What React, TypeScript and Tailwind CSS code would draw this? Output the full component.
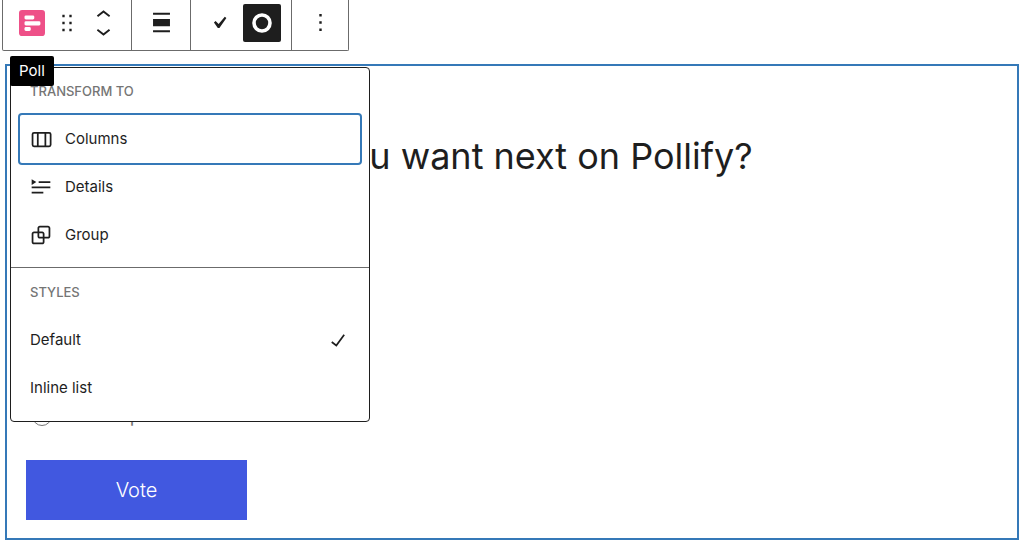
import React from "react";

type IconProps = {
  className?: string;
  children: React.ReactNode;
};

const Icon: React.FC<IconProps> = ({ className = "size-7", children }) => (
  <svg
    viewBox="0 0 24 24"
    fill="currentColor"
    aria-hidden="true"
    className={`shrink-0 ${className}`}
  >
    {children}
  </svg>
);

const transforms = [
  {
    name: "Columns",
    active: true,
    icon: (
      <path d="M15 7.5h-5v10h5v-10Zm1.5 0v10H19a.5.5 0 0 0 .5-.5V8a.5.5 0 0 0-.5-.5h-2.5ZM6 7.5h2.5v10H6a.5.5 0 0 1-.5-.5V8a.5.5 0 0 1 .5-.5ZM6 6h13a2 2 0 0 1 2 2v9a2 2 0 0 1-2 2H6a2 2 0 0 1-2-2V8a2 2 0 0 1 2-2Z" fillRule="evenodd" />
    ),
  },
  {
    name: "Details",
    active: false,
    icon: (
      <path d="M4 16h10v1.5H4V16Zm0-4.5h16V13H4v-1.5ZM10 7h10v1.5H10V7ZM4 5.25l4 2.5-4 2.5v-5Z" />
    ),
  },
  {
    name: "Group",
    active: false,
    icon: (
      <path d="M18 4h-7c-1.1 0-2 .9-2 2v3H6c-1.1 0-2 .9-2 2v7c0 1.1.9 2 2 2h7c1.1 0 2-.9 2-2v-3h3c1.1 0 2-.9 2-2V6c0-1.1-.9-2-2-2zm-4.5 14c0 .3-.2.5-.5.5H6c-.3 0-.5-.2-.5-.5v-7c0-.3.2-.5.5-.5h3V13c0 1.1.9 2 2 2h2.5v3zm0-4.5H11c-.3 0-.5-.2-.5-.5v-2.5H13c.3 0 .5.2.5.5v2.5zm5-.5c0 .3-.2.5-.5.5h-3V11c0-1.1-.9-2-2-2h-2.5V6c0-.3.2-.5.5-.5h7c.3 0 .5.2.5.5v7z" />
    ),
  },
];

const styles = [
  { name: "Default", selected: true },
  { name: "Inline list", selected: false },
];

const Toolbar: React.FC = () => (
  <div
    role="toolbar"
    aria-label="Block tools"
    className="ml-[2px] flex h-[51px] w-fit divide-x divide-[#6b6b6b] rounded-b-xs border border-t-0 border-[#6b6b6b]"
  >
    <div className="flex w-[129px] items-center gap-2 pb-[5px] pl-4">
      <button type="button" aria-label="Poll">
        <svg viewBox="0 0 25 25" className="size-[26px]" aria-hidden="true">
          <rect width="25" height="25" rx="3" fill="#ee5088" />
          <g fill="#fff">
            <rect x="5.3" y="5.3" width="9.4" height="3.8" rx="1.3" />
            <rect x="5.3" y="10.9" width="15.3" height="3.9" rx="1.3" />
            <rect x="5.3" y="16.4" width="6" height="3.7" rx="1.3" />
          </g>
        </svg>
      </button>
      <button type="button" aria-label="Drag">
        <Icon>
          <path d="M8 7h2V5H8v2zm0 6h2v-2H8v2zm0 6h2v-2H8v2zm6-14v2h2V5h-2zm0 8h2v-2h-2v2zm0 6h2v-2h-2v2z" />
        </Icon>
      </button>
      <div className="flex flex-col">
        <button type="button" aria-label="Move up" className="h-5 overflow-hidden">
          <Icon className="size-[29px]">
            <path d="M6.5 10.4L12 6l5.5 4.4-.9 1.2L12 8l-4.5 3.6-1-1.2z" />
          </Icon>
        </button>
        <button
          type="button"
          aria-label="Move down"
          className="flex h-5 items-end overflow-hidden"
        >
          <Icon className="size-[29px]">
            <path d="M17.5 13.6L12 18l-5.5-4.4.9-1.2L12 16l4.5-3.6 1 1.2z" />
          </Icon>
        </button>
      </div>
    </div>
    <div className="flex w-[59px] items-center justify-center pb-[5px]">
      <button type="button" aria-label="Align">
        <Icon className="size-[29px]">
          <path d="M19 5.5H5V4h14v1.5ZM19 20H5v-1.5h14V20ZM5 9h14v6H5V9Z" />
        </Icon>
      </button>
    </div>
    <div className="flex w-[101px] items-center justify-end gap-3 pr-[10px] pb-[5px]">
      <button type="button" aria-label="Multiple choice">
        <svg
          viewBox="0 0 20 20"
          fill="#1e1e1e"
          className="size-6"
          aria-hidden="true"
        >
          <path d="M14.83 4.89l1.34.94-5.81 8.38H9.02L5.78 9.67l1.34-1.25 2.57 2.4z" />
        </svg>
      </button>
      <button
        type="button"
        aria-label="Single choice"
        aria-pressed="true"
        className="flex size-[38px] items-center justify-center rounded-xs bg-[#1e1e1e]"
      >
        <svg viewBox="0 0 20 20" className="size-5" aria-hidden="true">
          <circle cx="10" cy="10" r="8" fill="none" stroke="#fff" strokeWidth="3.6" />
        </svg>
      </button>
    </div>
    <div className="flex w-14 items-center justify-center pb-[5px]">
      <button type="button" aria-label="Options">
        <Icon className="size-[29px]">
          <path d="M13 19h-2v-2h2v2zm0-6h-2v-2h2v2zm0-6h-2V5h2v2z" />
        </Icon>
      </button>
    </div>
  </div>
);

const SwitcherMenu: React.FC = () => (
  <div className="absolute top-[67px] left-[10px] w-[360px] rounded-sm border border-[#1e1e1e] bg-white text-[15px]">
    <section className="border-b border-[#6b6b6b] px-[9px] pt-[13px] pb-2">
      <h2 className="mb-[14px] px-[10px] text-[13px] leading-5 font-medium text-[#757575] uppercase">
        Transform to
      </h2>
      {transforms.map(({ name, active, icon }) => (
        <button
          key={name}
          type="button"
          className={`flex h-12 w-full items-center gap-[10px] rounded-xs px-[7px] ${
            active ? "ring-2 ring-[#3579b8]" : ""
          }`}
        >
          <Icon>{icon}</Icon>
          {name}
        </button>
      ))}
    </section>
    <section className="px-[9px] pt-[14px] pb-[9px]">
      <h2 className="mb-[14px] px-[10px] text-[13px] leading-5 font-medium text-[#757575] uppercase">
        Styles
      </h2>
      {styles.map(({ name, selected }) => (
        <button
          key={name}
          type="button"
          className="flex h-12 w-full items-center justify-between pr-2 pl-[10px]"
        >
          {name}
          {selected && (
            <Icon>
              <path d="M16.7 7.1l-6.3 8.5-3.3-2.5-.9 1.2 4.5 3.4L17.9 8z" />
            </Icon>
          )}
        </button>
      ))}
    </section>
  </div>
);

const PollBlock: React.FC = () => (
  <form className="mx-[5px] mt-[13px] border-2 border-[#3579b8] px-[19px] pt-[66px] pb-[18px]">
    <h1 className="text-4xl leading-12 whitespace-nowrap">
      Which feature do you want next on Pollify?
    </h1>
    <div className="mt-56 flex h-6 items-center gap-[14px] pl-[6px]">
      <input
        type="radio"
        name="option"
        aria-label="Choose option"
        className="size-5 appearance-none rounded-full border border-[#757575]"
      />
      <input
        type="text"
        aria-label="Option"
        placeholder="Enter option"
        className="text-[19px] leading-6 placeholder:text-[#757575]"
      />
    </div>
    <button
      type="button"
      className="mt-8 h-[60px] w-[221px] bg-[#4158e0] text-xl font-light text-white"
    >
      Vote
    </button>
  </form>
);

const App: React.FC = () => {
  return (
    <main className="relative bg-white font-['Inter',sans-serif] text-[#1e1e1e]">
      <Toolbar />
      <PollBlock />
      <SwitcherMenu />
      <span
        role="tooltip"
        className="absolute top-14 left-[10px] rounded-xs bg-black px-[9px] py-[5px] text-[15px] leading-5 text-white"
      >
        Poll
      </span>
    </main>
  );
};

export default App;
